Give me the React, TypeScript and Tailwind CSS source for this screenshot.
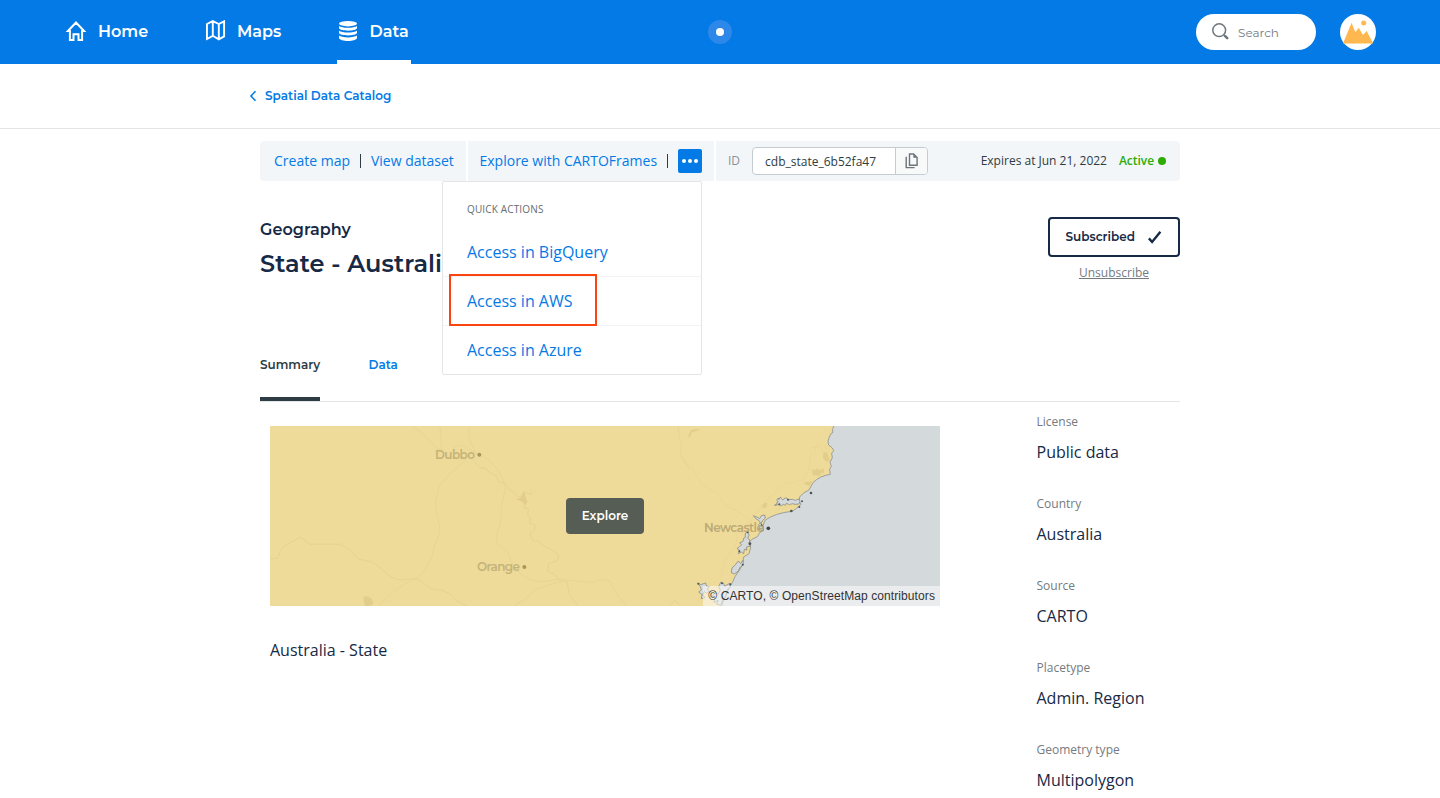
import React from "react";

const display = "font-['Montserrat','Inter',sans-serif]";

function HomeIcon() {
  return (
    <svg className="h-5 w-5" viewBox="0 0 20 20" fill="none" stroke="#fff" strokeWidth="2">
      <path d="M10 1.5 18.1 10H16.1V19H12.5V13.2H7.5V19H3.9V10H1.9Z" />
    </svg>
  );
}

function MapIcon() {
  return (
    <svg className="h-[21px] w-5" viewBox="0 0 20 21" fill="none" stroke="#fff" strokeWidth="1.9">
      <path d="M.95 4 6.8 1.1 12.8 4 18.1 1.3V16.4L12.8 19.4 6.8 15.8.95 19ZM6.8 1.1V15.8M12.8 4V19.5" />
    </svg>
  );
}

function DataIcon() {
  return (
    <svg className="h-5 w-[18px]" viewBox="0 0 18 20" fill="#fff">
      <ellipse cx="9" cy="2.7" rx="9" ry="2.7" />
      <path d="M0 5C3 7.4 15 7.4 18 5V7.3C17 10.5 1 10.5 0 7.3Z" />
      <path d="M0 9.8C3 12.2 15 12.2 18 9.8V12.1C17 15.3 1 15.3 0 12.1Z" />
      <path d="M0 14.6C3 17 15 17 18 14.6V16.9C17 20.9 1 20.9 0 16.9Z" />
    </svg>
  );
}

function Header() {
  return (
    <header className="flex h-16 items-center bg-[#047ae6] px-16 text-white">
      <nav className={`${display} flex h-full flex-1 text-[16px] font-semibold`}>
        <a className="flex h-full w-[140px] items-center pl-[2px]">
          <span className="-mt-[3px]"><HomeIcon /></span>
          <span className="ml-3">Home</span>
        </a>
        <a className="flex h-full w-[133px] items-center pl-[2px]">
          <span className="-mt-1"><MapIcon /></span>
          <span className="ml-[11px]">Maps</span>
        </a>
        <a className="flex h-full w-[74px] items-center border-b-4 border-white pl-[2px] pt-1">
          <span className="-mt-[2px]"><DataIcon /></span>
          <span className="ml-[12.5px]">Data</span>
        </a>
      </nav>
      <div className="flex h-6 w-6 items-center justify-center rounded-full bg-[#2e88e9]">
        <span className="h-2 w-2 rounded-full bg-white" />
      </div>
      <div className="flex flex-1 items-center justify-end">
        <div className="flex h-9 w-[120px] items-center rounded-full bg-white pl-4">
          <svg className="-mt-[2px] h-[17px] w-[17px]" viewBox="0 0 17 17" fill="none" stroke="#6f777c">
            <circle cx="7.2" cy="7.2" r="6.4" strokeWidth="1.5" />
            <path d="m12 12 1.4 1.4" strokeWidth="1.5" />
            <path d="m13.2 13.2 2 2" strokeWidth="2.6" strokeLinecap="round" />
          </svg>
          <span className={`${display} ml-[9px] pt-px text-[12px] text-[#747b80]`}>Search</span>
        </div>
        <svg className="ml-6 h-9 w-9" viewBox="0 0 36 36">
          <circle cx="18" cy="18" r="18" fill="#fff" />
          <path d="M3 29.5 11.6 8.8 15.3 18.3 18.7 13.7 23 21 26.7 17 33.2 29.5Z" fill="#feb84f" />
          <circle cx="23.7" cy="9" r="2.5" fill="#feb84f" />
        </svg>
      </div>
    </header>
  );
}

function Toolbar() {
  return (
    <div className="relative flex h-10 gap-[2px] text-[14px] text-[#047ae6]">
      <div className="flex w-[206px] items-center rounded-l-[4px] bg-[#f2f6f9] pl-[14px]">
        <a className="-mt-px whitespace-nowrap">Create map</a>
        <span className="mx-[10px] h-[14px] w-px bg-[#2e3c43]" />
        <a className="-mt-px whitespace-nowrap">View dataset</a>
      </div>
      <div className="flex w-[246px] items-center bg-[#f2f6f9] pl-[11.5px]">
        <a className="-mt-px whitespace-nowrap">Explore with CARTOFrames</a>
        <span className="ml-[10px] h-[14px] w-px bg-[#2e3c43]" />
        <button className="ml-auto mr-3 flex h-6 w-6 items-center justify-center gap-[2px] rounded-[2px] bg-[#047ae6]">
          <i className="h-1 w-1 rounded-full bg-white" />
          <i className="h-1 w-1 rounded-full bg-white" />
          <i className="h-1 w-1 rounded-full bg-white" />
        </button>
      </div>
      <div className="flex flex-1 items-center rounded-r-[4px] bg-[#f2f6f9] pl-3 pr-[14px] text-[12px] text-[#2e3c43]">
        <span className="text-[#8b9297]">ID</span>
        <div className="ml-3 flex h-7 w-[176px] rounded-[4px] border border-[#c3ccd2] bg-white">
          <span className="flex flex-1 items-center pl-3 pt-[2px]">cdb_state_6b52fa47</span>
          <span className="flex w-8 items-center justify-center rounded-r-[3px] border-l border-[#c3ccd2] bg-[#f8f9f9]">
            <svg className="h-4 w-[13px]" viewBox="0 0 13 16" fill="none" stroke="#6d757a" strokeWidth="1.4">
              <path d="M4.5 1H8.6L12.1 4.5V12.3H4.5ZM1.2 3.8V14.6H9.6" />
              <path d="M8.3 1V4.8H12.1Z" fill="#6d757a" stroke="none" />
            </svg>
          </span>
        </div>
        <span className="ml-auto">Expires at Jun 21, 2022</span>
        <span className="ml-3 font-semibold tracking-[-0.05px] text-[#2eab04]">Active</span>
        <span className="ml-1 h-2 w-2 rounded-full bg-[#2eab04]" />
      </div>
      <QuickActions />
    </div>
  );
}

function QuickActions() {
  return (
    <div className="absolute left-[182px] top-10 z-10 h-[194px] w-[260px] rounded-[2px] border border-[#e2e6e8] bg-white text-[16px]">
      <div className="flex h-[46px] items-center px-6 pt-[9px] text-[10px] font-medium tracking-[0.15px] text-[#636d72]">QUICK ACTIONS</div>
      <a className="flex h-[49px] items-center border-b border-[#f1f3f4] px-6">Access in BigQuery</a>
      <a className="flex h-[49px] items-center border-b border-[#f1f3f4] px-6">Access in AWS</a>
      <a className="flex h-12 items-center px-6">Access in Azure</a>
      <div className="absolute left-[6px] top-[92px] h-[52px] w-[148px] border-2 border-[#fa4510]" />
    </div>
  );
}

function MapPreview() {
  return (
    <div className="relative h-[180px] w-[670px] overflow-hidden bg-[#d4d9dc]">
      <svg className="h-[180px] w-[670px]" viewBox="0 0 670 180">
        <g transform="translate(410 -6) scale(.33333)">
          <path
            d="M-1240 8H466L457 29 459 37 453 41 448 51 444 63 446 75 457 84 461 92 455 100 457 113 450 127 454 139 449 148 451 163Q419 168 400 187L386 211 372 218 359 231 357 243 363 253 347 267 336 274Q285 279 255 301L249 318 250 332 240 337 232 350 218 357 209 365 212 383 207 401 191 411 187 435 178 451 165 470 157 488 148 501 140 522 130 543 122 568H-1240Z"
            fill="#eeda99" stroke="#8f9492" strokeWidth="2.5"
          />
          <g fill="#d4d9dc" stroke="#777d7c" strokeWidth="2" strokeLinejoin="bevel">
            <path d="m290 240 5-6 2 5 4-8 4 5 3 4 8-6 6 1 4 4 11-1 9 3 10-4 4 7-3 8-12 1-7-2-10 3-9-4-3 6-6-3-6 4-8-3-13 2 8-4-1-4 5-2z" />
            <path d="m220 287 12 5 7 4 5-9 10-2 2 9-8 7-5 10-7-10-9-5z" />
            <path d="m241 309 9 12-1 11-12-3 3-9-5-6z" />
            <path d="m196 340 7-5 4 11-4 9 7 5-4 12 5 7-12 2 2 9-8-2-2 13-7-5-9 5 4-10-8-5 10-8 4-4-6-5 10-5 2-9 5-3z" />
            <path d="m175 423 7 8 7-10 1 14-9 6-7 13-11 8-9-4 2-14 10-9 4-6z" />
            <path d="m53 489 9 5 15-5 2 9 9 2-7 8 7 5-9 7-6-6-5 11 7 8-11 3 2-12-10-8 8-6-3-10z" />
            <path d="m116 499 7-13 8 4 3 9 15-9 2 11-10 10-4 17-9 12-6 16-12-4 5-11-13 6 3-14-9-5 10-8 8 3 7-12z" />
          </g>
          <g fill="#4e5455">
            <circle cx="298" cy="253" r="3" /><circle cx="324" cy="239" r="3" /><circle cx="366" cy="244" r="3" />
            <circle cx="393" cy="219" r="4" /><circle cx="334" cy="273" r="4" /><circle cx="358" cy="261" r="3" />
            <circle cx="245" cy="316" r="3" /><circle cx="210" cy="371" r="4" /><circle cx="55" cy="491" r="3" />
            <circle cx="151" cy="493" r="3" /><circle cx="126" cy="490" r="3" /><circle cx="178" cy="394" r="3" />
            <circle cx="188" cy="434" r="3" /><circle cx="203" cy="337" r="3" />
          </g>
          <g fill="#e2cd8b">
            <path d="m25 48 8-18 22-4 3 4-22 7-8 16zM397 147l11 3 4-6 6 7 13-5 1 14-8-3-5 12-13-4-5 2-4-9zM430 96l12 2 4 17 4 5-11 6-10-13zM373 187l24-4-4 10-7 5-12-5zM245 257l10-9 7 1-2 12-8 5z" />
          </g>
          <g fill="none" stroke="#e3ce8d" strokeWidth="2">
            <path d="M396 82h17l3-16M406 82l-3 25M422 80l4 19M434 76l9 24M287 265l40-11 28 5M290 270l39-9M0 103q12 29 37 41l28 49 43 25 33 42 26 10 38 26M394 92l-7 57-18 31-54 12-53 47-51 64-39 27-4 45-35 49-9 48" strokeOpacity=".5" />
          </g>
          <circle cx="265" cy="325" r="5.5" fill="#3e464a" />
        </g>
        <g transform="translate(-10 -6) scale(.33333)" fill="none" stroke="#e2ce8c" strokeWidth="2" strokeLinejoin="round">
          <path d="M30 415q27 7 30-20l14-18 47-26 30 22h90q32 14 53 44l44 9 54 43q27 16 50 9l31-1 42 30 35 5 23 12q17 24 49 34" />
          <path d="M458 18q46 33 70 66l17 7-5-73M630 18q-12 28 6 57l14 29M582 92v-12l13-4 20 4 33 20M618 119q-51 42-77 75l-4 10-11 43q4 45 13 67 2 33-16 62-7 57-48 96-79 34-118 87" strokeOpacity=".65" />
          <path d="M643 126l20 19 15 0 8 11 22 11 8 18 18 4 17 22 13 7 10 12 12-2 11 12-5 24 14 3-4 16 10 12-4 15 18 5-3 15-13 10 8 21 20 4 12 12 27 14 18 13-2 18-27 9-4 22 22 10 14 19 23 2 7 40 24 31" />
          <path d="M665 107q41 23 58 60 19 37 9 55-9 38-12 90-16 44-8 62 37 16 41 49 23 55 90 63 42-7 66-10M763 557l30-18 32-30 82-27M907 478q50 8 97 9 23-13 46-4l17 35 29 38M1255 18q0 35 10 52l-4 33 29 47M1230 557l14-16 15 15M777 238l22-3-8-19 17 5 8-15M801 222l15 0 12-12" strokeOpacity=".65" />
        </g>
        <g transform="translate(-10 -6) scale(.33333)" fill="#e2cd8b">
          <path d="m310 535 6-8 18 8 6 14-6 9h-19zM768 238l15-5 3-12 8-7 2 20 7 10-7 10-11-10z" />
          <circle cx="658" cy="104" r="6" fill="#a8965b" />
          <circle cx="793" cy="441" r="6" fill="#a8965b" />
        </g>
        <g className="font-['Montserrat','Inter',sans-serif] text-[12px] font-semibold" fill="#c5b47a">
          <text x="165" y="33" textLength="40">Dubbo</text>
          <text x="207" y="145" textLength="43">Orange</text>
          <text x="434" y="106" textLength="60" fill="#b5a470" fillOpacity=".9">Newcastle</text>
        </g>
      </svg>
      <button className={`${display} absolute left-[296px] top-[72px] h-9 w-[78px] rounded-[4px] bg-[#565d55] text-[12px] font-semibold text-white`}>
        Explore
      </button>
      <div className="absolute bottom-0 right-0 h-5 whitespace-nowrap bg-white/50 px-[5px] font-['Liberation_Sans',sans-serif] text-[12px] leading-5 tracking-[0.09px] text-[#333]">
        © CARTO, © OpenStreetMap contributors
      </div>
    </div>
  );
}

const details = [
  ["License", "Public data"],
  ["Country", "Australia"],
  ["Source", "CARTO"],
  ["Placetype", "Admin. Region"],
  ["Geometry type", "Multipolygon"],
];

export default function App() {
  return (
    <div className="h-[798px] overflow-hidden bg-white font-['Open_Sans',sans-serif] text-[#162945]">
      <Header />
      <div className="h-[65px] border-b border-[#e2e6e8]">
        <a className={`${display} ml-[249px] flex h-16 items-center text-[12px] font-semibold text-[#047ae6]`}>
          <svg className="mr-[8px] h-3 w-2" viewBox="0 0 8 12" fill="none" stroke="currentColor" strokeWidth="1.6">
            <path d="M6.5 1.2 2 6l4.5 4.8" />
          </svg>
          <span className="tracking-[0.03px]">Spatial Data Catalog</span>
        </a>
      </div>
      <main className="mx-auto w-[920px] pt-3">
        <Toolbar />
        <section className="flex h-[148px] justify-between pt-9">
          <div className={`${display} pt-px font-semibold`}>
            <p className="text-[16px] leading-6 tracking-[0.05px]">Geography</p>
            <h1 className="mt-1 whitespace-nowrap text-[24px] leading-9 tracking-[0.09px]">State - Australia</h1>
          </div>
          <div className="flex w-[132px] flex-col items-center">
            <button className={`${display} flex h-10 w-full items-center rounded-[4px] border-2 border-[#162945] pl-[15.5px] text-[12px] font-semibold`}>
              <span>Subscribed</span>
              <svg className="ml-auto mr-[16px] h-[13px] w-[14px]" viewBox="0 0 14 13" fill="none" stroke="currentColor" strokeWidth="2.4">
                <path d="M.9 7.4 4.1 11 12.4.8" />
              </svg>
            </button>
            <a className="mt-[7px] text-[12px] leading-[18px] text-[#747b80] underline">Unsubscribe</a>
          </div>
        </section>
        <nav className={`${display} flex h-[73px] gap-12 border-b border-[#e2e6e8] text-[12px] font-semibold`}>
          <a className="flex h-[72px] w-[60px] items-center whitespace-nowrap border-b-4 border-[#2e3c43] pt-1 text-[#2e3c43]">Summary</a>
          <a className="flex h-[72px] items-center pl-[0.5px] text-[#047ae6]">Data</a>
        </nav>
        <div className="flex justify-between">
          <section className="pl-[10px] pt-6">
            <MapPreview />
            <p className="mt-8 text-[16px] leading-6">Australia - State</p>
          </section>
          <dl className="w-[143.5px] pt-[11px]">
            {details.map(([label, value]) => (
              <div key={label} className="h-[82px]">
                <dt className="text-[12px] leading-[18px] text-[#747b80]">{label}</dt>
                <dd className="mt-[9px] whitespace-nowrap text-[16px] leading-6">{value}</dd>
              </div>
            ))}
          </dl>
        </div>
      </main>
    </div>
  );
}
